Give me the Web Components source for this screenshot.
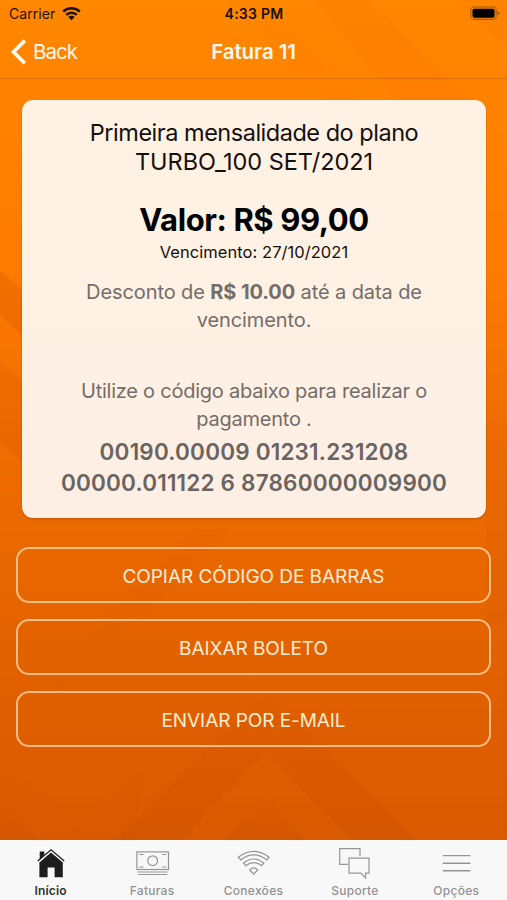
<!DOCTYPE html>
<html lang="pt-BR">
<head>
<meta charset="utf-8">
<title>Fatura 11</title>
<style>
    html, body{
        margin:0;
        height:100%;
    }
    body{
        overflow:hidden;
        font-family:Inter,"Liberation Sans",sans-serif;
    }
</style>
</head>
<body>
<app-screen>
    <status-bar slot="top" carrier="Carrier" time="4:33 PM"></status-bar>
    <nav-bar slot="top" back="Back">Fatura 11</nav-bar>

    <invoice-card>
        <span slot="title">Primeira mensalidade do plano</span>
        <span slot="plan">TURBO_100 SET/2021</span>
        <span slot="value">Valor: R$ 99,00</span>
        <span slot="due">Vencimento: 27/10/2021</span>
        <span slot="discount">Desconto de <b>R$ 10.00</b> até a data de<br>vencimento.</span>
        <span slot="hint">Utilize o código abaixo para realizar o<br>pagamento .</span>
        <span slot="code">00190.00009 01231.231208<br>00000.011122 6 87860000009900</span>
    </invoice-card>

    <action-list>
        <outline-button>COPIAR CÓDIGO DE BARRAS</outline-button>
        <outline-button>BAIXAR BOLETO</outline-button>
        <outline-button>ENVIAR POR E-MAIL</outline-button>
    </action-list>

    <tab-bar slot="bottom">
        <tab-item icon="home" active>Início</tab-item>
        <tab-item icon="money">Faturas</tab-item>
        <tab-item icon="wifi">Conexões</tab-item>
        <tab-item icon="chat">Suporte</tab-item>
        <tab-item icon="menu">Opções</tab-item>
    </tab-bar>
</app-screen>

<script>
function define(name, html, setup){
    const tpl = document.createElement('template');
    tpl.innerHTML = html;
    customElements.define(name, class extends HTMLElement {
        constructor(){
            super();
            this.attachShadow({mode:'open'});
            this.shadowRoot.appendChild(tpl.content.cloneNode(true));
        }
        connectedCallback(){
            if (setup) setup(this, this.shadowRoot);
        }
    });
}

define('app-screen', /*html*/`
    <style>
        :host{
            display:grid;
            grid-template-rows:auto 1fr auto;
            height:100vh;
            position:relative;
            overflow:hidden;
            background:linear-gradient(#ff8800 0,#ff8200 11%,#fd7b00 30%,#ee6c00 50%,#e86700 63%,#df5e00 80%,#da5a00 94%);
        }
        /* chevron pattern painted behind everything */
        .pattern{
            position:absolute;
            inset:0;
            width:100%;
            height:100%;
        }
        .top, main, .bottom{
            position:relative;
        }
    </style>
    <svg class="pattern" viewBox="0 0 507 900" preserveAspectRatio="none">
        <defs>
            <linearGradient id="up" x1="0" y1="0" x2="0" y2="1">
                <stop offset="0" stop-color="#b84000" stop-opacity=".04"/>
                <stop offset="1" stop-color="#b84000" stop-opacity=".16"/>
            </linearGradient>
        </defs>
        <g fill="#ef6500" fill-opacity=".12">
            <path d="M313 0H370L470 100H397Z"/>
            <path d="M225 0H262L362 100H325Z" fill-opacity=".06"/>
            <path d="M458 0H507V48Z"/>
        </g>
        <path d="M0 271L22 289V335L0 315Z" fill="#d04c00" fill-opacity=".26"/>
        <path d="M0 362L30 386V470L0 440Z" fill="#d04c00" fill-opacity=".16"/>
        <path d="M486 402L507 422V620L486 640Z" fill="#c94a00" fill-opacity=".08"/>
        <path d="M195 530L50 675V700L230 530Z" fill="#c94a00" fill-opacity=".04"/>
        <g fill="url(#up)">
            <path d="M266 690L416 840H352L266 752L180 840H116Z"/>
            <path d="M266 799L307 840H225Z"/>
            <path d="M0 755L78 829L150 757L130 840H35L0 803Z" fill-opacity=".35"/>
            <path d="M0 803L38 840H0Z"/>
        </g>
    </svg>
    <div class="top"><slot name="top"></slot></div>
    <main><slot></slot></main>
    <div class="bottom"><slot name="bottom"></slot></div>
`);

define('status-bar', /*html*/`
    <style>
        :host{
            display:grid;
            grid-template-columns:1fr auto 1fr;
            align-items:center;
            height:27px;
            padding:0 7px 0 9px;
            font-size:14px;
            color:#1c1000;
        }
        .left{
            display:flex;
            align-items:center;
            gap:7px;
            letter-spacing:.05px;
        }
        .time{
            font-weight:600;
            letter-spacing:.25px;
            margin-right:1px;
        }
        .battery{
            justify-self:end;
        }
        svg{
            display:block;
        }
    </style>
    <div class="left">
        <span id="carrier"></span>
        <svg width="19" height="15" viewBox="0 0 19 15">
            <g fill="none" stroke="#1c1000" stroke-width="2.5">
                <path d="M1.2 5.6A11.8 11.8 0 0 1 17.8 5.6"/>
                <path d="M4.2 8.8A7.6 7.6 0 0 1 14.8 8.8"/>
            </g>
            <path d="M6.3 11A4.6 4.6 0 0 1 12.7 11L9.5 14.3Z" fill="#1c1000"/>
        </svg>
    </div>
    <span class="time" id="time"></span>
    <svg class="battery" width="30" height="15" viewBox="0 0 30 15">
        <rect x=".8" y="1" width="25.4" height="12.4" rx="3.4" fill="none" stroke="#a85a00" stroke-width="1.1"/>
        <rect x="2.5" y="2.7" width="22" height="9" rx="1.8" fill="#000"/>
        <path d="M27.5 5.2Q29.4 5.8 29.4 7.2T27.5 9.2Z" fill="#a85a00"/>
    </svg>
`, (el, root) => {
    root.getElementById('carrier').textContent = el.getAttribute('carrier');
    root.getElementById('time').textContent = el.getAttribute('time');
});

define('nav-bar', /*html*/`
    <style>
        :host{
            display:grid;
            grid-template-columns:1fr auto 1fr;
            align-items:center;
            box-sizing:border-box;
            height:52px;
            padding:0 10px 2px;
            border-bottom:1px solid rgba(150,60,0,.3);
            color:#fff8ee;
            font-size:20.5px;
        }
        .back{
            display:flex;
            align-items:center;
            gap:6px;
            letter-spacing:-.95px;
        }
        .title{
            font-weight:600;
            letter-spacing:-.1px;
        }
        svg{
            display:block;
        }
    </style>
    <div class="back">
        <svg width="17" height="26" viewBox="0 0 17 26">
            <path d="M14.8 1.6L3.4 12.9L14.8 24.2" fill="none" stroke="#fff8ee" stroke-width="3.6"/>
        </svg>
        <span id="back"></span>
    </div>
    <span class="title"><slot></slot></span>
`, (el, root) => {
    root.getElementById('back').textContent = el.getAttribute('back');
});

define('invoice-card', /*html*/`
    <style>
        :host{
            display:block;
            box-sizing:border-box;
            height:418px;
            margin:21px 21px 0 22px;
            padding-top:18px;
            border-radius:11px;
            background:rgba(255,255,255,.895);
            box-shadow:0 1px 2px rgba(120,40,0,.35);
            text-align:center;
            white-space:nowrap;
            color:#14100c;
        }
        .title, .plan{
            font-size:23.5px;
            line-height:29px;
            letter-spacing:-.48px;
        }
        .plan{
            letter-spacing:-.05px;
        }
        .value{
            margin-top:25px;
            font-size:31px;
            line-height:38px;
            font-weight:700;
            letter-spacing:-.4px;
            color:#000;
        }
        .due{
            margin-top:1.7px;
            font-size:16.5px;
            line-height:22px;
            letter-spacing:.05px;
        }
        .text{
            margin-top:15px;
            font-size:20px;
            line-height:28px;
            letter-spacing:-.1px;
            color:#746d68;
        }
        .text.hint{
            margin-top:43.3px;
            letter-spacing:-.24px;
        }
        .code{
            margin-top:2.6px;
            font-size:22.5px;
            line-height:31.8px;
            font-weight:600;
            letter-spacing:.19px;
            color:#6a6460;
        }
        ::slotted(span){
            display:block;
        }
    </style>
    <div class="title"><slot name="title"></slot></div>
    <div class="plan"><slot name="plan"></slot></div>
    <div class="value"><slot name="value"></slot></div>
    <div class="due"><slot name="due"></slot></div>
    <div class="text"><slot name="discount"></slot></div>
    <div class="text hint"><slot name="hint"></slot></div>
    <div class="code"><slot name="code"></slot></div>
`);

define('action-list', /*html*/`
    <style>
        :host{
            display:grid;
            gap:16px;
            padding:29px 16px 0;
        }
    </style>
    <slot></slot>
`);

define('outline-button', /*html*/`
    <style>
        :host{
            display:block;
        }
        button{
            display:block;
            width:100%;
            height:56px;
            padding:2px 0 0;
            border:2px solid rgba(255,212,165,.8);
            border-radius:13px;
            background:none;
            font:inherit;
            font-size:19px;
            letter-spacing:-.06px;
            color:#ffecd4;
        }
    </style>
    <button><slot></slot></button>
`);

define('tab-bar', /*html*/`
    <style>
        :host{
            display:grid;
            grid-template-columns:repeat(5,1fr);
            height:60px;
            background:#f8f8f8;
        }
    </style>
    <slot></slot>
`);

const icons = {
    home: `
        <path d="M7.7 3.6H12.3V7L7.7 11.5Z" fill="#1d1d1d"/>
        <path d="M5.8 13L19 1.8L32.2 13" fill="none" stroke="#1d1d1d" stroke-width="1.3"/>
        <path d="M19 4.4L30.8 14.4V29.2H22.6V19.4H15.6V29.2H7.4V14.4Z" fill="#1d1d1d"/>`,
    money: `
        <rect x="2.9" y="3.9" width="31.6" height="17.6"/>
        <circle cx="18.7" cy="12.7" r="4.9"/>
        <path d="M5.3 6.5H9.5M28.1 6.5H32.3M5.3 19H9.5M28.1 19H32.3M3.6 24H33.8M4.2 26.5H33.2"/>`,
    wifi: `
        <path d="M3.2 9.2Q18.7-2.6 34.2 9.2L31.8 11.9Q18.7 1.9 5.6 11.9Z"/>
        <path d="M8.6 15Q18.7 7 28.8 15L26.6 17.7Q18.7 11.6 10.8 17.7Z"/>
        <path d="M14.7 21.9Q18.7 18 22.7 21.9L18.7 26.2Z"/>`,
    chat: `
        <path d="M11.8 16.3H3.7V.7H24V8.6"/>
        <path d="M13 10.1H33V25.1H29.6V29.9L24.8 25.1H13Z"/>`,
    menu: `
        <path d="M4.8 7.6H32.4M4.8 15.3H32.4M4.8 22.8H32.4" stroke-width="1.4"/>`
};

define('tab-item', /*html*/`
    <style>
        :host{
            display:flex;
            flex-direction:column;
            align-items:center;
            padding-top:8px;
            font-size:12px;
            line-height:15px;
            font-weight:550;
            letter-spacing:.28px;
            color:#929292;
        }
        :host([active]){
            font-weight:600;
            letter-spacing:.15px;
            color:#333;
        }
        svg{
            display:block;
            fill:none;
            stroke:#959595;
            stroke-width:1.2;
            margin-bottom:4.4px;
        }
        :host([active]) svg{
            stroke:none;
        }
    </style>
    <svg width="37" height="31" viewBox="0 0 37 31"></svg>
    <span><slot></slot></span>
`, (el, root) => {
    root.querySelector('svg').innerHTML = icons[el.getAttribute('icon')];
});
</script>
</body>
</html>
